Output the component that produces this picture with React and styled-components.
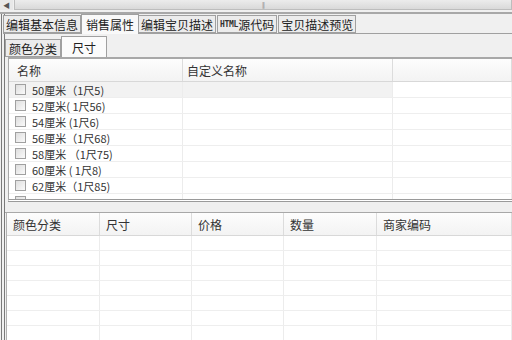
import React from "react";
import styled, { createGlobalStyle } from "styled-components";

const Global = createGlobalStyle`
  html, body { margin: 0; padding: 0; background: #f0f0f0; overflow: hidden; }
  body { font-family: "Noto Sans CJK SC", "Noto Sans", sans-serif; font-size: 12px; color: #222; }
  * { box-sizing: border-box; }
`;

const Page = styled.div`
  width: 512px;
  height: 340px;
  display: flex;
  flex-direction: column;
  overflow: hidden;
`;

const HScroll = styled.div`
  height: 14px;
  display: flex;
  align-items: stretch;
  background: #f0f0f0;
  border-bottom: 2px solid #a8a8a8;
  padding-bottom: 2px;
`;

const ScrollArrow = styled.div`
  width: 13px;
  display: flex;
  align-items: center;
  justify-content: center;
  font-size: 7px;
  color: #555;
  background: #e8e8e8;
`;

const ScrollThumb = styled.div`
  flex: 1;
  margin-left: 1px;
  background: linear-gradient(#ececec, #d9d9d9);
  border: 1px solid #bdbdbd;
  border-top: none;
  display: flex;
  justify-content: center;
  align-items: center;
  font-size: 6px;
  color: #888;
  letter-spacing: -1px;
`;

const Body = styled.div`
  flex: 1;
  display: flex;
  flex-direction: column;
  border-left: 4px double #7a7a7a;
  margin-left: 1px;
  min-height: 0;
`;

const TabBar = styled.div`
  display: flex;
  align-items: flex-end;
  height: 20px;
  margin-left: -2px;
  border-bottom: 1px solid #a0a0a0;
`;

const Tab = styled.div`
  height: ${(p) => (p.$active ? "20px" : "18px")};
  margin-bottom: ${(p) => (p.$active ? "-1px" : "0")};
  padding: 0 ${(p) => p.$pad ?? 2}px;
  display: flex;
  align-items: center;
  border: 1px solid #a0a0a0;
  border-bottom: ${(p) => (p.$active ? "none" : "1px solid #a0a0a0")};
  margin-left: ${(p) => (p.$active ? "-1px" : "0")};
  margin-right: ${(p) => (p.$active ? "-1px" : "1px")};
  background: ${(p) => (p.$active ? "#f9f9f9" : "#ececec")};
  font-size: 12px;
  white-space: nowrap;
  position: relative;
  z-index: ${(p) => (p.$active ? 1 : 0)};
  color: #222;
`;

const Latin = styled.span`
  font-family: "DejaVu Sans Mono", monospace;
  font-size: 8px;
  font-weight: bold;
  letter-spacing: -0.3px;
  color: #333;
`;

const SubTabBar = styled.div`
  display: flex;
  align-items: flex-end;
  height: 23px;
  padding-left: 0;
`;

const SubTab = styled(Tab)`
  height: ${(p) => (p.$active ? "21px" : "18px")};
  background: ${(p) => (p.$active ? "#fbfbfb" : "#ececec")};
  margin-bottom: 0;
`;

const ListBox = styled.div`
  margin-left: 3px;
  height: 145px;
  background: #fff;
  border-top: 2px solid #a8a8a8;
  border-left: 1px solid #a8a8a8;
  border-bottom: 3px double #9a9a9a;
  overflow: hidden;
  display: flex;
  flex-direction: column;
`;

const Grid = styled.div`
  display: grid;
  grid-template-columns: ${(p) => p.$cols};
  height: ${(p) => p.$h}px;
  flex-shrink: 0;
  background: ${(p) => p.$bg || "#fff"};
  border-bottom: 1px solid ${(p) => p.$line || "#eeeeee"};
`;

const HeadCell = styled.div`
  display: flex;
  align-items: center;
  padding-left: ${(p) => p.$pl ?? 6}px;
  font-size: 12px;
  color: #333;
  border-right: 1px solid #dcdcdc;
  background: linear-gradient(#fdfdfd, #f3f3f3);
`;

const Cell = styled.div`
  display: flex;
  align-items: center;
  padding-left: ${(p) => p.$pl ?? 4}px;
  font-size: 11px;
  color: #333;
  border-right: 1px solid #ececec;
  white-space: nowrap;
  overflow: hidden;
  background: ${(p) => p.$bg || "transparent"};
`;

const Check = styled.span`
  width: 11px;
  height: 11px;
  border: 1px solid #a0a0a0;
  background: linear-gradient(135deg, #dedede, #fafafa);
  margin-right: 6px;
  flex-shrink: 0;
`;

const Gap = styled.div`
  height: 11px;
  flex-shrink: 0;
  background: #efefef;
  border-bottom: 1px solid #a8a8a8;
`;

const Lower = styled.div`
  flex: 1;
  background: #fff;
  border-left: 1px solid #b0b0b0;
  margin-left: 1px;
  overflow: hidden;
`;

const sizes = [
  "50厘米（1尺5)",
  "52厘米( 1尺56)",
  "54厘米 (1尺6)",
  "56厘米（1尺68)",
  "58厘米 （1尺75)",
  "60厘米 ( 1尺8)",
  "62厘米（1尺85)",
];

const topCols = "174px 210px 1fr";
const lowCols = "93px 92px 92px 93px 1fr";

export default function App() {
  return (
    <Page>
      <Global />
      <HScroll>
        <ScrollArrow>◀</ScrollArrow>
        <ScrollThumb>|||</ScrollThumb>
      </HScroll>
      <Body>
        <TabBar>
          <Tab>编辑基本信息</Tab>
          <Tab $active $pad={4}>销售属性</Tab>
          <Tab>编辑宝贝描述</Tab>
          <Tab>
            <Latin>HTML</Latin>源代码
          </Tab>
          <Tab>宝贝描述预览</Tab>
        </TabBar>
        <SubTabBar>
          <SubTab $pad={3}>颜色分类</SubTab>
          <SubTab $active $pad={10}>尺寸</SubTab>
        </SubTabBar>
        <ListBox>
          <Grid $cols={topCols} $h={23} $line="#d8d8d8">
            <HeadCell $pl={8}>名称</HeadCell>
            <HeadCell $pl={4}>自定义名称</HeadCell>
            <HeadCell />
          </Grid>
          {sizes.map((s, i) => (
            <Grid key={s} $cols={topCols} $h={16}>
              <Cell $pl={6} $bg={i === 0 ? "#f2f2f2" : ""}>
                <Check />
                {s}
              </Cell>
              <Cell $bg={i === 0 ? "#f2f2f2" : ""} />
              <Cell />
            </Grid>
          ))}
          <Grid $cols={topCols} $h={16}>
            <Cell $pl={6}>
              <Check />
            </Cell>
            <Cell />
            <Cell />
          </Grid>
        </ListBox>
        <Gap />
        <Lower>
          <Grid $cols={lowCols} $h={23} $line="#d8d8d8">
            <HeadCell>颜色分类</HeadCell>
            <HeadCell>尺寸</HeadCell>
            <HeadCell>价格</HeadCell>
            <HeadCell>数量</HeadCell>
            <HeadCell>商家编码</HeadCell>
          </Grid>
          {Array.from({ length: 8 }).map((_, i) => (
            <Grid key={i} $cols={lowCols} $h={15}>
              <Cell />
              <Cell />
              <Cell />
              <Cell />
              <Cell />
            </Grid>
          ))}
        </Lower>
      </Body>
    </Page>
  );
}
